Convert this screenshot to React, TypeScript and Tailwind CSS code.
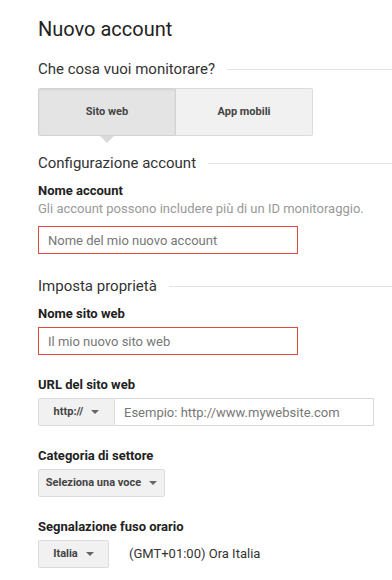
import type { JSX, ReactNode } from "react";

const font = "[font-family:Roboto,'Liberation_Sans',Arial,sans-serif]";

const SectionHeading = ({ children, className = "" }: { children: ReactNode; className?: string }) => (
  <div className={`flex items-center gap-3 ${className}`}>
    <h2 className="text-[15px] leading-[20px] text-[#333] whitespace-nowrap">{children}</h2>
    <div className="flex-1 h-px bg-[#e3e3e3]" />
  </div>
);

const Label = ({ children, className = "" }: { children: ReactNode; className?: string }) => (
  <div className={`text-[13px] leading-[18px] font-bold text-[#222] ${className}`}>{children}</div>
);

const Caret = () => (
  <svg width="8" height="4" viewBox="0 0 8 4" className="shrink-0">
    <path d="M0 0h8L4 4z" fill="#666" />
  </svg>
);

const Select = ({ label, width, className = "" }: { label: string; width: string; className?: string }) => (
  <button
    className={`flex items-center justify-center gap-2 h-[28px] ${width} bg-[#f1f1f1] border border-[#dcdcdc] rounded-[2px] text-[11px] font-bold text-[#444] ${className}`}
  >
    <span>{label}</span>
    <Caret />
  </button>
);

export default function App(): JSX.Element {
  return (
    <div className={`w-[392px] h-[580px] overflow-hidden bg-white pl-[38px] pt-[15px] ${font}`}>
      <h1 className="text-[20px] leading-[28px] text-[#222]">Nuovo account</h1>

      <SectionHeading className="mt-4">Che cosa vuoi monitorare?</SectionHeading>

      {/* tabs */}
      <div className="relative mt-[9px] flex w-[275px] h-[48px]">
        <button className="w-[138px] h-full bg-[#e4e4e4] border border-[#d2d2d2] rounded-l-[2px] shadow-[inset_0_1px_2px_rgba(0,0,0,0.08)] text-[11px] font-bold text-[#444]">
          Sito web
        </button>
        <button className="flex-1 h-full bg-[#f1f1f1] border border-l-0 border-[#dcdcdc] rounded-r-[2px] text-[11px] font-bold text-[#444]">
          App mobili
        </button>
        <svg width="14" height="7" viewBox="0 0 14 7" className="absolute left-[62px] top-[48px]">
          <path d="M0 0h14L7 7z" fill="#dadada" />
        </svg>
      </div>

      <SectionHeading className="mt-[17px]">Configurazione account</SectionHeading>

      <Label className="mt-[9px]">Nome account</Label>
      <p className="text-[13px] leading-[18px] text-[#999]">Gli account possono includere più di un ID monitoraggio.</p>
      <input
        className="mt-[8px] block w-[260px] h-[28px] border border-[#dd4b39] px-[9px] text-[13px] text-[#333] placeholder:text-[#777] outline-none"
        placeholder="Nome del mio nuovo account"
      />

      <SectionHeading className="mt-[22px]">Imposta proprietà</SectionHeading>

      <Label className="mt-[9px]">Nome sito web</Label>
      <input
        className="mt-[4px] block w-[260px] h-[28px] border border-[#dd4b39] px-[9px] text-[13px] text-[#333] placeholder:text-[#777] outline-none"
        placeholder="Il mio nuovo sito web"
      />

      <Label className="mt-[21px]">URL del sito web</Label>
      <div className="mt-[4px] flex w-[336px] h-[28px]">
        <Select label="http://" width="w-[77px]" className="rounded-r-none" />
        <input
          className="flex-1 min-w-0 h-full border border-l-0 border-[#d9d9d9] px-[9px] text-[13px] text-[#333] placeholder:text-[#777] outline-none"
          placeholder="Esempio: http://www.mywebsite.com"
        />
      </div>

      <Label className="mt-[21px]">Categoria di settore</Label>
      <Select label="Seleziona una voce" width="w-[127px]" className="mt-[4px]" />

      <Label className="mt-[21px]">Segnalazione fuso orario</Label>
      <div className="mt-[4px] flex items-center gap-5">
        <Select label="Italia" width="w-[71px]" />
        <span className="text-[13px] text-[#333]">(GMT+01:00) Ora Italia</span>
      </div>
    </div>
  );
}
